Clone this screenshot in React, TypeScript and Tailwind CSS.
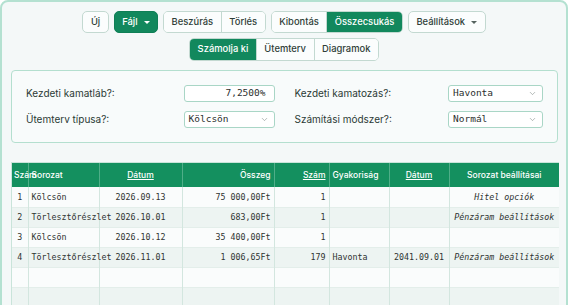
import { ChevronDown } from 'lucide-react'

type Row = {
  n: number
  series: string
  date: string
  amount: string
  count: string
  freq: string
  end: string
  settings: string
}

const ROWS: Row[] = [
  { n: 1, series: 'Kölcsön', date: '2026.09.13', amount: '75 000,00Ft', count: '1', freq: '', end: '', settings: 'Hitel opciók' },
  { n: 2, series: 'Törlesztőrészlet', date: '2026.10.01', amount: '683,00Ft', count: '1', freq: '', end: '', settings: 'Pénzáram beállítások' },
  { n: 3, series: 'Kölcsön', date: '2026.10.12', amount: '35 400,00Ft', count: '1', freq: '', end: '', settings: '' },
  { n: 4, series: 'Törlesztőrészlet', date: '2026.11.01', amount: '1 006,65Ft', count: '179', freq: 'Havonta', end: '2041.09.01', settings: 'Pénzáram beállítások' },
]

const COLS = [16, 71, 83, 92, 55, 60, 60, 110]

function Caret({ light }: { light?: boolean }) {
  return (
    <span
      className={`ml-[6px] inline-block h-0 w-0 border-x-[3px] border-t-[3px] border-x-transparent ${
        light ? 'border-t-white' : 'border-t-[#55635e]'
      }`}
    />
  )
}

function Btn({ label, active, caret }: { label: string; active?: boolean; caret?: boolean }) {
  return (
    <button
      type="button"
      className={`flex h-[22px] items-center rounded-[5px] border px-[7.5px] text-[9.4px] font-medium ${
        active
          ? 'border-[#0f7f56] bg-[#12885d] text-white'
          : 'border-[#c3d9d1] bg-[#fbfdfd] text-[#2f3d38]'
      }`}
    >
      {label}
      {caret && <Caret light={active} />}
    </button>
  )
}

function Group({ items, active, tall }: { items: string[]; active: number; tall?: boolean }) {
  return (
    <div className={`flex overflow-hidden rounded-[5px] border border-[#c3d9d1] ${tall ? 'h-[23px]' : 'h-[22px]'}`}>
      {items.map((item, i) => (
        <button
          key={item}
          type="button"
          className={`flex items-center px-[7.5px] text-[9.4px] font-medium ${i > 0 ? 'border-l border-[#c3d9d1]' : ''} ${
            i === active ? 'bg-[#12885d] text-white' : 'bg-[#fbfdfd] text-[#2f3d38]'
          }`}
        >
          {item}
        </button>
      ))}
    </div>
  )
}

function Select({ value, width }: { value: string; width: string }) {
  return (
    <div
      className={`flex h-[17px] items-center justify-between rounded-[3px] border border-[#a9d6c6] bg-white pl-[4px] pr-[5px] font-['DejaVu_Sans_Mono',monospace] text-[9.5px] text-[#2b2f2e] ${width}`}
    >
      <span>{value}</span>
      <ChevronDown size={9} strokeWidth={1.5} className="text-[#7d8884]" />
    </div>
  )
}

function Field({ label, children }: { label: string; children: React.ReactNode }) {
  return (
    <div className="flex items-center justify-between">
      <span className="text-[10px] text-[#2b3a35]">{label}</span>
      {children}
    </div>
  )
}

export default function App() {
  const empty = 2
  return (
    <div className="h-[305px] w-[570px] overflow-hidden bg-white font-['Inter',sans-serif]">
      <div className="h-[330px] w-[568px] rounded-[8px] border-2 border-[#b4e1d1] bg-[#f4f8f8] px-[9px] pt-[9px]">
        <div className="flex justify-center gap-[5px]">
          <Btn label="Új" />
          <Btn label="Fájl" active caret />
          <Group items={['Beszúrás', 'Törlés']} active={-1} />
          <Group items={['Kibontás', 'Összecsukás']} active={1} />
          <Btn label="Beállítások" caret />
        </div>
        <div className="mt-[5px] flex justify-center">
          <Group items={['Számolja ki', 'Ütemterv', 'Diagramok']} active={0} tall />
        </div>

        <div className="mt-[9px] grid w-[547px] grid-cols-2 gap-x-[20px] gap-y-[9px] rounded-[4px] border border-[#b4dfcf] bg-[#f8fbfb] px-[14px] py-[14px]">
          <Field label="Kezdeti kamatláb?:">
            <div className="flex h-[17px] w-[91px] items-center justify-end rounded-[3px] border border-[#a9d6c6] bg-white pr-[8px] font-['DejaVu_Sans_Mono',monospace] text-[9.5px] text-[#2b2f2e]">
              7,2500%
            </div>
          </Field>
          <Field label="Kezdeti kamatozás?:">
            <Select value="Havonta" width="w-[95px]" />
          </Field>
          <Field label="Ütemterv típusa?:">
            <Select value="Kölcsön" width="w-[91px]" />
          </Field>
          <Field label="Számítási módszer?:">
            <Select value="Normál" width="w-[95px]" />
          </Field>
        </div>

        <div className="mt-[19px] w-[548px] border border-[#c9e4da]">
          <table className="w-full table-fixed border-collapse">
            <colgroup>
              {COLS.map((w, i) => (
                <col key={i} style={{ width: w }} />
              ))}
            </colgroup>
            <thead>
              <tr className="h-[24px] bg-[#14905f] text-[8.5px] font-medium text-white">
                <th className="whitespace-nowrap border-r border-[#4fae88] pl-[2px] text-left font-medium">Szám</th>
                <th className="border-r border-[#4fae88] pl-[3px] text-left font-medium">Sorozat</th>
                <th className="border-r border-[#4fae88] text-center font-medium underline">Dátum</th>
                <th className="border-r border-[#4fae88] pr-[3px] text-right font-medium">Összeg</th>
                <th className="border-r border-[#4fae88] pr-[3px] text-right font-medium underline">Szám</th>
                <th className="border-r border-[#4fae88] pl-[3px] text-left font-medium">Gyakoriság</th>
                <th className="border-r border-[#4fae88] text-center font-medium underline">Dátum</th>
                <th className="text-center font-medium">Sorozat beállításai</th>
              </tr>
            </thead>
            <tbody className="font-['DejaVu_Sans_Mono',monospace] text-[8.3px] text-[#2e3331]">
              {ROWS.map((r, i) => (
                <tr key={r.n} className={`h-[20px] border-b border-[#e3eeea] ${i % 2 ? 'bg-[#edf4f2]' : 'bg-[#fafcfc]'}`}>
                  <td className="border-r border-[#d3e6df] text-center">{r.n}</td>
                  <td className="whitespace-nowrap border-r border-[#d3e6df] pl-[3px]">{r.series}</td>
                  <td className="border-r border-[#d3e6df] text-center">{r.date}</td>
                  <td className="border-r border-[#d3e6df] pr-[3px] text-right">{r.amount}</td>
                  <td className="border-r border-[#d3e6df] pr-[3px] text-right">{r.count}</td>
                  <td className="border-r border-[#d3e6df] pl-[3px]">{r.freq}</td>
                  <td className="border-r border-[#d3e6df] text-center">{r.end}</td>
                  <td className="whitespace-nowrap text-center italic">{r.settings}</td>
                </tr>
              ))}
              {Array.from({ length: empty }).map((_, i) => (
                <tr key={`e${i}`} className={`h-[20px] border-b border-[#e3eeea] ${i % 2 ? 'bg-[#edf4f2]' : 'bg-[#fafcfc]'}`}>
                  {COLS.map((_, j) => (
                    <td key={j} className={j < COLS.length - 1 ? 'border-r border-[#d3e6df]' : ''} />
                  ))}
                </tr>
              ))}
            </tbody>
          </table>
        </div>
      </div>
    </div>
  )
}
